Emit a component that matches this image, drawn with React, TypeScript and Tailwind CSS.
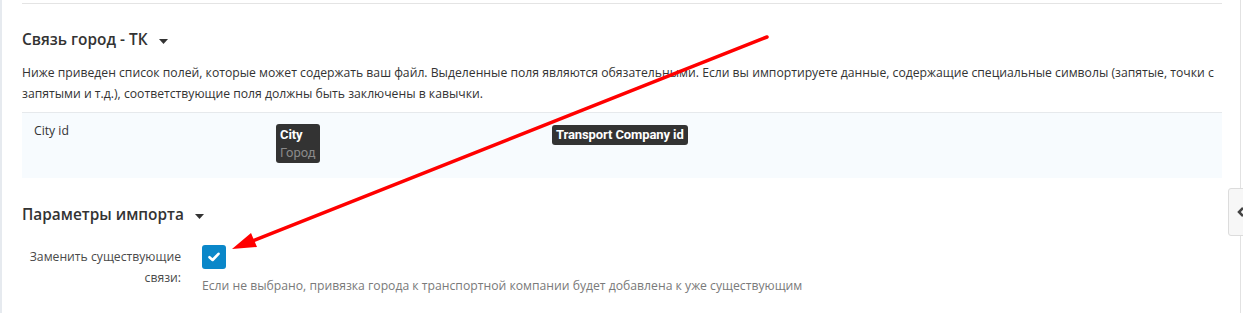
import React from "react";

const Caret = () => (
  <svg width="9" height="5" viewBox="0 0 9 5" className="ml-[11px] mt-[2px]">
    <path d="M0 0 L9 0 L4.5 5 Z" fill="#333" />
  </svg>
);

export default function App() {
  return (
    <div
      className="relative w-[1243px] h-[313px] bg-white overflow-hidden flex text-[#333]"
      style={{ fontFamily: '"Open Sans", "Noto Sans", sans-serif' }}
    >
      <div className="w-[2px] bg-[#e6eaef] shrink-0" />
      <div className="w-[20px] shrink-0" />
      <div className="w-[1200px] shrink-0 flex flex-col">
        <div className="mt-[3px] h-px bg-[#e4e4e4]" />
        <div className="mt-[24px] flex items-center h-[24px]">
          <span className="text-[15.4px] font-semibold leading-[24px]">Связь город - ТК</span>
          <Caret />
        </div>
        <p className="mt-[9.5px] text-[12.2px] leading-[21px]">
          Ниже приведен список полей, которые может содержать ваш файл. Выделенные поля являются обязательными. Если вы импортируете данные, содержащие специальные символы (запятые, точки с запятыми и т.д.), соответствующие поля должны быть заключены в кавычки.
        </p>
        <div className="mt-[8.5px] border-t border-[#e6e9ec] bg-[#f7fbfe] h-[66px] flex">
          <div className="w-[242px] pl-[12px] pt-[8px] text-[12.2px] leading-[20px]">City id</div>
          <div className="w-[276px] pl-[12px] pt-[8px]">
            <div
              className="inline-flex flex-col bg-[#333333] rounded-[3px] px-[4px] h-[39px] justify-center"
              style={{ fontFamily: "Roboto, sans-serif" }}
            >
              <span className="text-white font-bold text-[13px] leading-[19px] tracking-[-0.1px]">City</span>
              <span className="text-[#8a8a8a] text-[13px] leading-[18px]">Город</span>
            </div>
          </div>
          <div className="flex-1 pl-[12px] pt-[8px]">
            <div
              className="inline-flex items-center bg-[#333333] rounded-[3px] px-[4px] h-[20px] text-white font-bold text-[13px] tracking-[-0.1px]"
              style={{ fontFamily: "Roboto, sans-serif" }}
            >
              Transport Company id
            </div>
          </div>
        </div>
        <div className="mt-[25px] flex items-center h-[24px]">
          <span className="text-[15.4px] font-semibold leading-[24px]">Параметры импорта</span>
          <Caret />
        </div>
        <div className="mt-[18px] flex">
          <div className="w-[159px] text-right text-[12.2px] leading-[21px] text-[#4a4a4a] pt-[1px] whitespace-nowrap">
            Заменить существующие
            <br />
            связи:
          </div>
          <div className="ml-[21px] flex flex-col">
            <div className="w-[24px] h-[24px] rounded-[3px] bg-[#0a87c9] flex items-center justify-center">
              <svg width="12" height="10" viewBox="0 0 12 10">
                <path d="M1.5 5.2 L4.6 8 L10.5 1.8" stroke="white" strokeWidth="2.6" fill="none" strokeLinecap="round" strokeLinejoin="round" />
              </svg>
            </div>
            <div className="mt-[5.5px] text-[12.2px] leading-[21px] text-[#7a7a7a] whitespace-nowrap">
              Если не выбрано, привязка города к транспортной компании будет добавлена к уже существующим
            </div>
          </div>
        </div>
      </div>
      <div className="w-[18px] shrink-0" />
      <div className="w-px bg-[#e2e2e2] shrink-0" />
      <div className="absolute left-[1228px] top-[188px] w-[20px] h-[48px] border border-[#dcdcdc] rounded-l-[3px] bg-[#f7f7f7] flex items-center pl-[8px]">
        <svg width="8" height="10" viewBox="0 0 8 10">
          <path d="M6 1 L2 5 L6 9" stroke="#444" strokeWidth="2.5" fill="none" />
        </svg>
      </div>
      <svg className="absolute left-0 top-0 pointer-events-none" width="1243" height="313">
        <line x1="767" y1="37" x2="250" y2="242" stroke="#ff0000" strokeWidth="3.5" strokeLinecap="round" />
        <path d="M232 249 L251 233 L257 247 Z" fill="#ff0000" />
      </svg>
    </div>
  );
}
